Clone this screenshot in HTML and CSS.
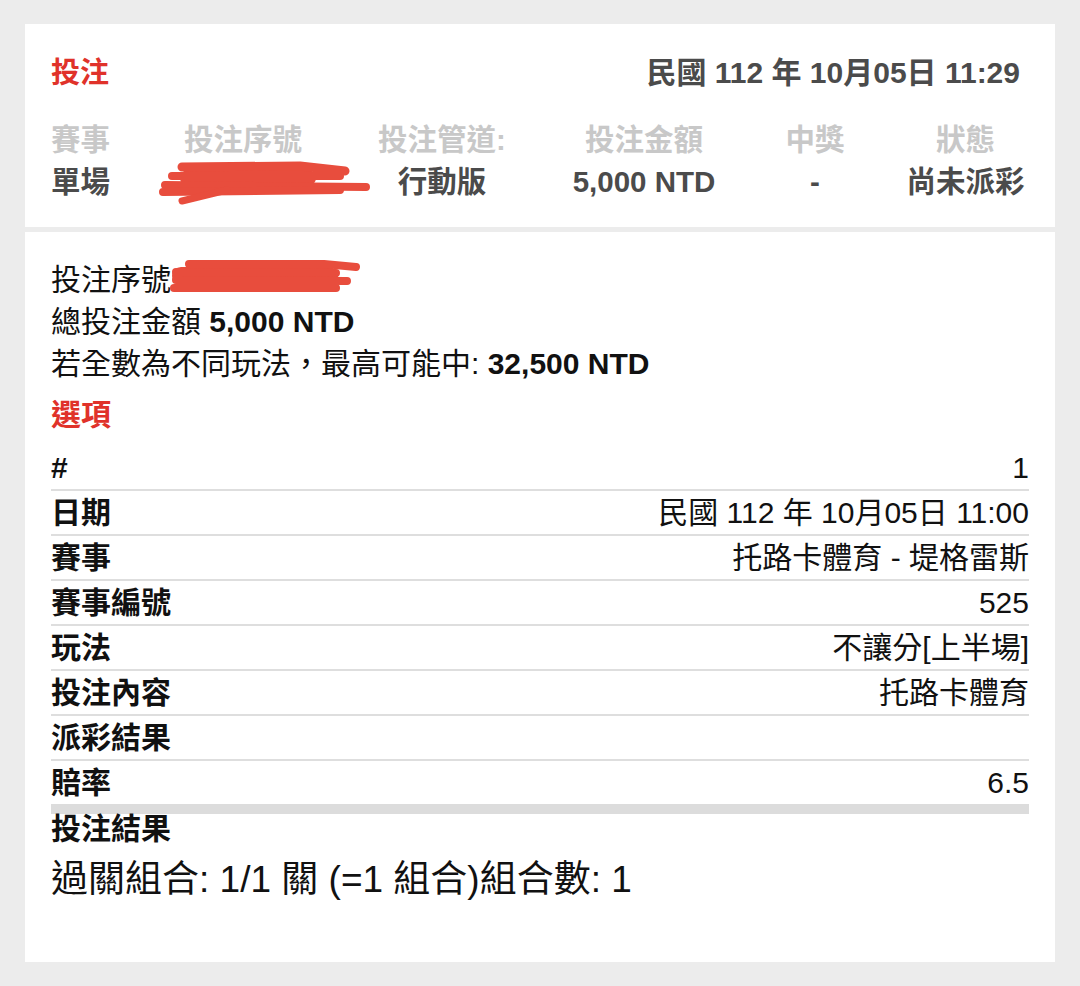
FILE: index.html
```html
<!DOCTYPE html>
<html lang="zh-Hant">
<head>
<meta charset="utf-8">
<title>投注</title>
<link rel="stylesheet" href="styles.css">
</head>
<body>
<div class="page">
  <section class="card summary">
    <div class="summary-head">
      <h1 class="title-red">投注</h1>
      <div class="head-date">民國 112 年 10月05日 11:29</div>
    </div>
    <div class="summary-grid">
      <div class="lbl first">賽事</div>
      <div class="lbl">投注序號</div>
      <div class="lbl">投注管道:</div>
      <div class="lbl">投注金額</div>
      <div class="lbl">中獎</div>
      <div class="lbl">狀態</div>
      <div class="val first">單場</div>
      <div class="val">
        <svg class="redact redact-a" width="214" height="50" viewBox="0 0 214 50">
          <g fill="none" stroke="#e84d3d" stroke-linecap="round" stroke-linejoin="round">
            <path d="M30 20 L150 20" stroke-width="16"/>
            <path d="M24 9 L142 8 L187 13" stroke-width="9"/>
            <path d="M14 18 L182 18" stroke-width="8"/>
            <path d="M7 27 L208 29" stroke-width="8"/>
            <path d="M5 34 L182 32" stroke-width="8"/>
            <path d="M24 43 L69 32" stroke-width="7"/>
          </g>
        </svg>
      </div>
      <div class="val">行動版</div>
      <div class="val">5,000 NTD</div>
      <div class="val">-</div>
      <div class="val">尚未派彩</div>
    </div>
  </section>

  <section class="card detail">
    <p class="line">投注序號<span class="redact-anchor"><svg class="redact redact-b" width="194" height="40" viewBox="0 0 194 40">
      <g fill="none" stroke="#e84d3d" stroke-linecap="round" stroke-linejoin="round">
        <path d="M12 18 L160 18" stroke-width="18"/>
        <path d="M20 6 L155 6 L187 9" stroke-width="8"/>
        <path d="M7 14 L167 15" stroke-width="8"/>
        <path d="M7 22 L178 23" stroke-width="8"/>
        <path d="M5 30 L167 30" stroke-width="8"/>
      </g>
    </svg></span></p>
    <p class="line">總投注金額 <b>5,000 NTD</b></p>
    <p class="line">若全數為不同玩法，最高可能中: <b>32,500 NTD</b></p>
    <h2 class="title-red options-title">選項</h2>
    <div class="opt-table">
      <div class="opt-row"><span class="k">#</span><span class="v">1</span></div>
      <div class="opt-row"><span class="k">日期</span><span class="v">民國 112 年 10月05日 11:00</span></div>
      <div class="opt-row"><span class="k">賽事</span><span class="v">托路卡體育 - 堤格雷斯</span></div>
      <div class="opt-row"><span class="k">賽事編號</span><span class="v">525</span></div>
      <div class="opt-row"><span class="k">玩法</span><span class="v">不讓分[上半場]</span></div>
      <div class="opt-row"><span class="k">投注內容</span><span class="v">托路卡體育</span></div>
      <div class="opt-row"><span class="k">派彩結果</span><span class="v"></span></div>
      <div class="opt-row"><span class="k">賠率</span><span class="v">6.5</span></div>
    </div>
    <div class="result-title">投注結果</div>
    <div class="combo">過關組合: 1/1 關 (=1 組合)組合數: 1</div>
  </section>
</div>
</body>
</html>
```

FILE: styles.css
```css
html, body {
  margin: 0;
  background: #ececec;
}

body {
  font-family: "Liberation Sans", "Noto Sans CJK TC", sans-serif;
  color: #111;
}

.page {
  padding: 24px 25px 0;
}

.card {
  background: #fff;
}

.summary {
  padding: 28px 26px 24px;
}

.summary-head {
  display: flex;
  justify-content: space-between;
  align-items: center;
  height: 42px;
}

.title-red {
  margin: 0;
  font-size: 29px;
  font-weight: 700;
  line-height: 42px;
  color: #e0322a;
}

.head-date {
  font-size: 30px;
  font-weight: 700;
  line-height: 42px;
  color: #4b4b4b;
  margin-right: 9px;
}

.summary-grid {
  display: grid;
  grid-template-columns: 111px 162px 236px 168px 174px 127px;
  margin-top: 25px;
  font-size: 29.5px;
  font-weight: 700;
  line-height: 42px;
  text-align: center;
}

.summary-grid .first {
  text-align: left;
}

.lbl {
  color: #c8c8c8;
}

.val {
  color: #4b4b4b;
  position: relative;
  height: 42px;
}

.redact {
  position: absolute;
  display: block;
}

.redact-a {
  left: -4px;
  top: -3px;
}

.redact-anchor {
  position: relative;
  display: inline-block;
  width: 0;
  height: 42px;
  vertical-align: top;
}

.redact-b {
  left: -2px;
  top: -1px;
}

.detail {
  margin-top: 5px;
  padding: 27px 26px 62px;
}

.line {
  margin: 0;
  font-size: 30px;
  line-height: 42px;
}

.line b {
  font-weight: 700;
}

.options-title {
  margin: 9px 0 10px;
  font-size: 30px;
}

.opt-row {
  display: flex;
  justify-content: space-between;
  height: 43px;
  font-size: 30px;
  line-height: 43px;
  border-bottom: 2px solid #dedede;
}

.opt-row:last-child {
  border-bottom: 10px solid #dcdcdc;
}

.opt-row .k {
  font-weight: 700;
}

.result-title {
  font-size: 30px;
  font-weight: 700;
  line-height: 30px;
}

.combo {
  margin-top: 16px;
  font-size: 37px;
  line-height: 40px;
}
```
